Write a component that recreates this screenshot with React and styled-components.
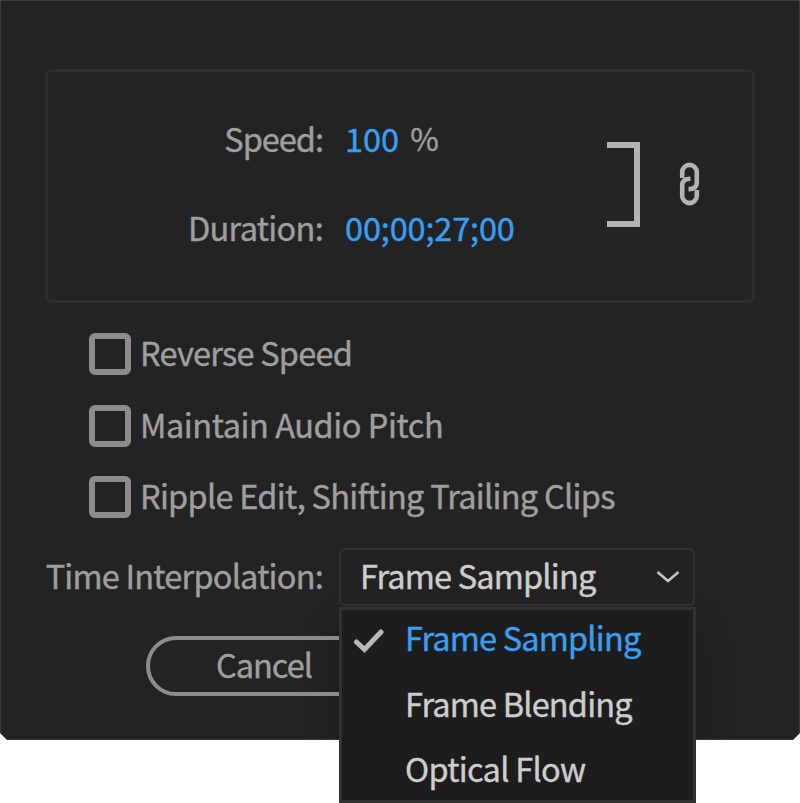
import { useState } from "react";
import styled, { createGlobalStyle } from "styled-components";

const GlobalStyle = createGlobalStyle`
  * {
    box-sizing: border-box;
  }

  body {
    margin: 0;
    min-height: 803px;
    background-color: #ffffff;
    font-family: "Noto Sans CJK SC", "Noto Sans", sans-serif;
    font-size: 32.5px;
    line-height: 48px;
    color: #9f9f9f;
  }
`;

const StyledDialog = styled.main`
  position: relative;
  width: 800px;
  height: 740px;
  padding: 69px 45px 0;
`;

const StyledBackdrop = styled.div`
  position: absolute;
  inset: 0;
  z-index: -1;
  overflow: hidden;
  background-color: #232323;
  border: 1px solid #3b3b3b;
  border-radius: 0 0 6px 6px;
  clip-path: polygon(0 0, 100% 0, 100% 733px, 793px 100%, 7px 100%, 0 733px);

  &::after {
    content: "";
    position: absolute;
    left: 339px;
    top: 624px;
    width: 355px;
    height: 180px;
    box-shadow: 0 0 34px rgba(0, 0, 0, 0.3);
  }
`;

const StyledText = styled.span`
  display: block;
  white-space: pre;
  letter-spacing: ${({ $tracking }) => $tracking || 0}px;
  -webkit-text-stroke: 0.4px currentColor;
`;

const StyledGroup = styled.section`
  display: flex;
  height: 234px;
  padding-top: 42px;
  border: 3px solid #2e2e2e;
  border-radius: 7px;
`;

const StyledFields = styled.div`
  display: grid;
  grid-template-columns: 275px 1fr;
  grid-auto-rows: 48px;
  row-gap: 41px;
  column-gap: 22px;
  width: 558px;
`;

const StyledLabel = styled(StyledText)`
  justify-self: end;
`;

const StyledValue = styled.div`
  display: flex;
  gap: 11px;
`;

const StyledNumber = styled(StyledText)`
  color: #389ff3;
`;

const StyledPercent = styled(StyledText)`
  font-size: 31px;
`;

const StyledBracket = styled.div`
  width: 33px;
  height: 85px;
  margin: 28px 0 0 1px;
  border: 6px solid #b3b3b3;
  border-left: 0;
`;

const StyledChain = styled.svg`
  width: 22px;
  height: 46px;
  margin: 47px 0 0 39px;
`;

const StyledOptions = styled.div`
  display: flex;
  flex-direction: column;
  gap: 23px;
  padding: 27px 0 0 44px;
`;

const StyledOption = styled.label`
  display: flex;
  align-items: center;
  gap: 9px;
  height: 48.4px;

  span {
    position: relative;
    top: -2px;
  }
`;

const StyledCheckbox = styled.input`
  appearance: none;
  width: 42px;
  height: 42px;
  margin: 0;
  border: 6px solid #8c8c8c;
  border-radius: 6px;
`;

const StyledInterpolation = styled.div`
  display: flex;
  align-items: center;
  justify-content: flex-end;
  gap: 16px;
  height: 58px;
  margin-top: 27px;
  padding-right: 60px;

  > span {
    padding-bottom: 4px;
  }
`;

const StyledSelectWrap = styled.div`
  position: relative;
`;

const StyledSelect = styled.button`
  display: flex;
  align-items: center;
  justify-content: space-between;
  width: 356px;
  height: 58px;
  padding: 0 12px 0 19px;
  border: 2px solid #303030;
  border-radius: 6px;
  background-color: #222222;
  color: #cdcdcd;
  font: inherit;

  span {
    position: relative;
    top: -2px;
  }
`;

const StyledMenu = styled.ul`
  position: absolute;
  left: 0;
  top: 59px;
  z-index: 1;
  width: 357px;
  height: 196px;
  margin: 0;
  padding: 3px 0 0 11px;
  border: 3px solid #323232;
  background-color: #1d1d1d;
  list-style-type: none;
`;

const StyledItem = styled.li`
  display: grid;
  grid-template-columns: 32px 1fr;
  align-items: center;
  column-gap: 20px;
  height: 65.3px;
  padding-bottom: 17px;
  color: ${({ $selected }) => ($selected ? "#389ff3" : "#cdcdcd")};

  span {
    grid-column: 2;
    grid-row: 1;
  }
`;

const StyledCheck = styled.svg`
  grid-row: 1;
  width: 32px;
  height: 26px;
  position: relative;
  top: 4px;
`;

const StyledCancel = styled.button`
  display: flex;
  width: 240px;
  height: 60px;
  margin: 30px 0 0 101px;
  padding: 0 0 0 66px;
  border: 4px solid #8c8c8c;
  border-radius: 30px;
  background: none;
  color: #9f9f9f;
  font: inherit;
`;

const options = [
  { label: "Reverse Speed", tracking: -0.75 },
  { label: "Maintain Audio Pitch", tracking: -0.45 },
  { label: "Ripple Edit, Shifting Trailing Clips", tracking: -0.73 },
];

const methods = [
  { name: "Frame Sampling", tracking: -0.82 },
  { name: "Frame Blending", tracking: -0.82 },
  { name: "Optical Flow", tracking: -0.7 },
];

export default function App() {
  const [selected, setSelected] = useState(0);

  return (
    <>
      <GlobalStyle />
      <StyledDialog>
        <StyledBackdrop />
        <StyledGroup>
          <StyledFields>
            <StyledLabel $tracking={-1}>Speed:</StyledLabel>
            <StyledValue>
              <StyledNumber>100</StyledNumber>
              <StyledPercent>%</StyledPercent>
            </StyledValue>
            <StyledLabel $tracking={-0.7}>Duration:</StyledLabel>
            <StyledNumber $tracking={-0.15}>00;00;27;00</StyledNumber>
          </StyledFields>
          <StyledBracket />
          <StyledChain viewBox="0 0 22 46" fill="none" stroke="#b3b3b3">
            <path
              d="M3.2 17V11.2A7.3 7.3 0 0 1 17.8 11.2V21.5Q17.8 28.2 9.5 28.2"
              strokeWidth="4.6"
            />
            <path
              d="M17.8 29V34.8A7.3 7.3 0 0 1 3.2 34.8V24.5Q3.2 17.8 11.5 17.8"
              strokeWidth="4.6"
            />
          </StyledChain>
        </StyledGroup>

        <StyledOptions>
          {options.map(({ label, tracking }) => (
            <StyledOption key={label}>
              <StyledCheckbox type="checkbox" />
              <StyledText $tracking={tracking}>{label}</StyledText>
            </StyledOption>
          ))}
        </StyledOptions>

        <StyledInterpolation>
          <StyledText $tracking={-0.78}>Time Interpolation:</StyledText>
          <StyledSelectWrap>
            <StyledSelect>
              <StyledText $tracking={methods[selected].tracking}>
                {methods[selected].name}
              </StyledText>
              <svg width="26" height="16" viewBox="0 0 26 16" fill="none">
                <path d="M2.5 3L13 12L23.5 3" stroke="#c4c4c4" strokeWidth="2.6" />
              </svg>
            </StyledSelect>
            <StyledMenu>
              {methods.map(({ name, tracking }, index) => (
                <StyledItem
                  key={name}
                  $selected={index === selected}
                  onClick={() => setSelected(index)}
                >
                  {index === selected ? (
                    <StyledCheck viewBox="0 0 32 26" fill="none">
                      <path
                        d="M3.5 14L11.5 21.5L28 4"
                        stroke="#b8b8b8"
                        strokeWidth="5"
                        strokeLinecap="round"
                      />
                    </StyledCheck>
                  ) : null}
                  <StyledText $tracking={tracking}>{name}</StyledText>
                </StyledItem>
              ))}
            </StyledMenu>
          </StyledSelectWrap>
        </StyledInterpolation>

        <StyledCancel>
          <StyledText $tracking={-1}>Cancel</StyledText>
        </StyledCancel>
      </StyledDialog>
    </>
  );
}
